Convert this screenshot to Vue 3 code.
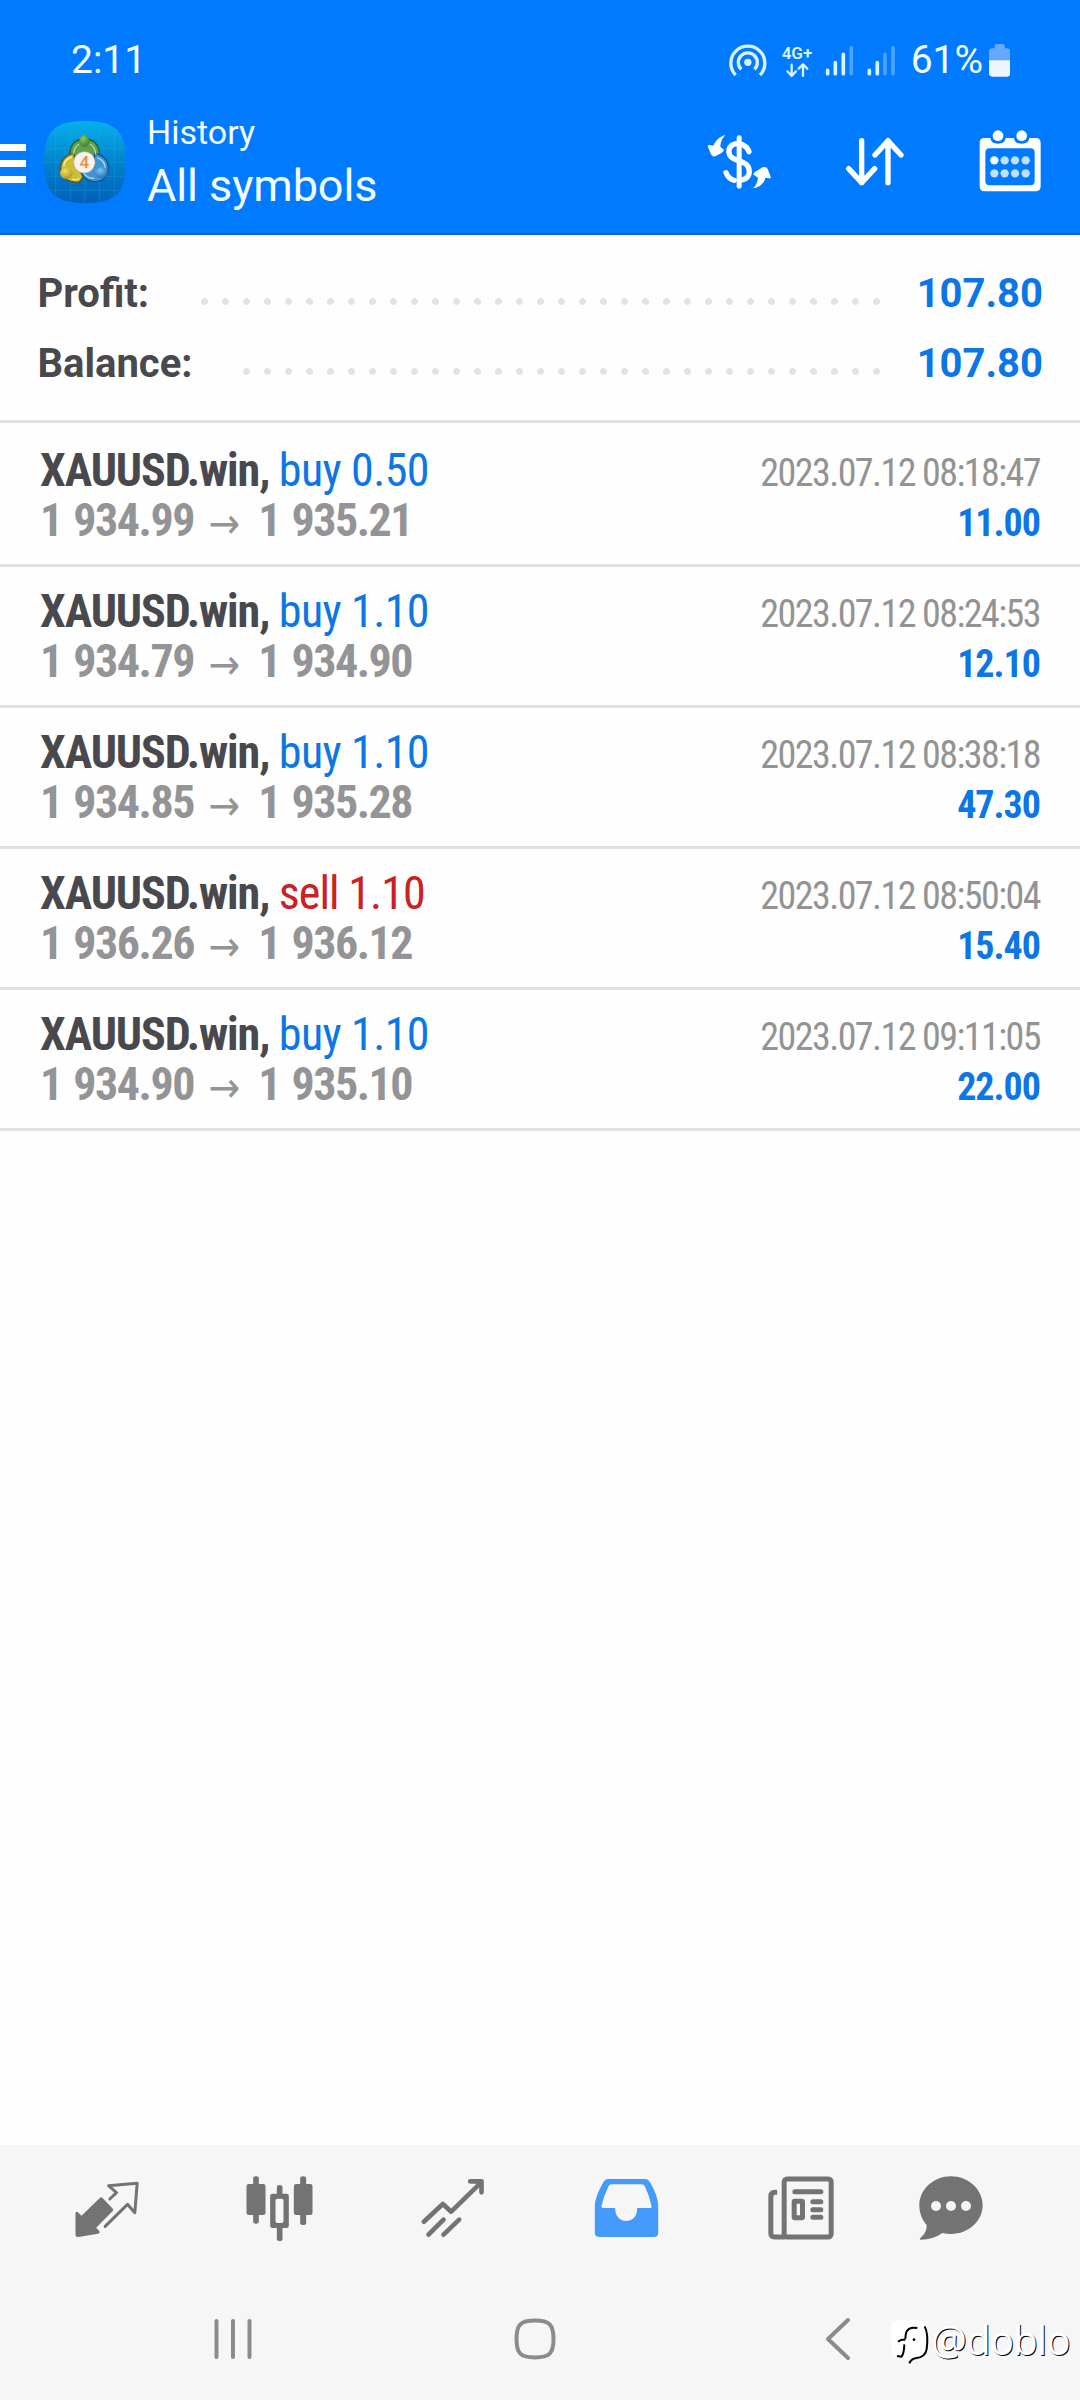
<template>
  <div class="screen">
    <header class="header">
      <div class="status">
        <span class="clock">2:11</span>
        <div class="status-right">
          <svg class="radio" viewBox="140 120 520 120">
            <g fill="none" stroke="#d9f3ff" stroke-width="10">
              <path d="M166 225A51 51 0 1 1 239 225" />
              <path d="M183 208A28.500 28.500 0 1 1 222 208" />
            </g>
            <circle cx="202.500" cy="187" r="11" fill="#d9f3ff" />
            <text x="304" y="178" class="net">4G+</text>
            <g fill="none" stroke="#d9f3ff" stroke-width="7" stroke-linecap="round" stroke-linejoin="round">
              <path d="M334 194V227M321 214L334 228L347 214" />
              <path d="M368 227V194M355 206L368 193L381 206" />
            </g>
            <g stroke="#d9f3ff" stroke-width="11" stroke-linecap="round">
              <path d="M442 211V221M465 188V221M489 163V221M567 211V221M591 188V221" />
              <path opacity=".35" d="M513 143V221M614 163V221M638 143V221" />
            </g>
          </svg>
          <span class="percent">61%</span>
          <svg class="battery" viewBox="924 133 64 98">
            <path fill="#66a8fb" d="M941 138Q941 133 946 133H966Q971 133 971 138V146H979Q988 147 988 157V185H924V157Q924 147 933 146H941Z" />
            <path fill="#edf5ff" d="M924 182H988V221Q988 231 978 231H934Q924 231 924 221Z" />
          </svg>
        </div>
      </div>

      <div class="toolbar">
        <div class="burger"><i></i><i></i><i></i></div>
        <svg class="logo" viewBox="0 0 246 246">
          <defs>
            <linearGradient id="tile" x1="0" y1="0" x2="0" y2="1">
              <stop offset="0" stop-color="#06b0ee" />
              <stop offset=".5" stop-color="#0283cd" />
              <stop offset="1" stop-color="#0160b8" />
            </linearGradient>
            <radialGradient id="green" cx=".4" cy=".3" r=".8">
              <stop offset="0" stop-color="#8fc65a" />
              <stop offset="1" stop-color="#2c7a2c" />
            </radialGradient>
            <radialGradient id="gold" cx=".4" cy=".3" r=".8">
              <stop offset="0" stop-color="#efe26a" />
              <stop offset="1" stop-color="#a48e14" />
            </radialGradient>
            <radialGradient id="blue" cx=".4" cy=".3" r=".8">
              <stop offset="0" stop-color="#7cc6f4" />
              <stop offset="1" stop-color="#1c69b4" />
            </radialGradient>
          </defs>
          <path fill="url(#tile)" d="M123 0C215 0 246 31 246 123S215 246 123 246S0 215 0 123S31 0 123 0Z" />
          <path stroke="#35b4e6" stroke-width="1.500" opacity=".5" d="M35 20V226M79 3V243M123 0V246M167 3V243M211 20V226M20 40H226M4 82H242M0 124H246M4 166H242M20 208H226" />
          <g stroke-width="4">
            <path fill="#5f9f52" stroke="#255f2e" d="M78 98C78 70 96 54 122 54S166 70 166 100Q164 122 150 136L96 136Q78 120 78 98Z" />
            <path fill="#cdbc35" stroke="#5d5517" d="M90 97C62 102 46 124 51 150C58 176 80 188 108 182L128 150L92 116Z" />
            <path fill="#3f94d4" stroke="#174f86" d="M152 97C184 102 197 126 192 152C184 178 162 187 138 180Q116 170 110 152L150 138Z" />
          </g>
          <path fill="none" stroke="#b5d897" stroke-width="4" d="M89 100C90 84 98 73 106 69M138 69C148 74 154 86 155 100" />
          <path fill="none" stroke="#f4ec9c" stroke-width="4" d="M84 108C66 114 58 124 60 138M84 174Q96 180 106 172" />
          <path fill="none" stroke="#a8dbf8" stroke-width="4" d="M160 110C178 118 184 126 183 140M120 158Q134 174 152 172" />
          <ellipse cx="121" cy="60" rx="15" ry="18" fill="url(#green)" />
          <ellipse cx="67" cy="157" rx="19" ry="17" fill="url(#gold)" />
          <ellipse cx="172" cy="155" rx="18" ry="16" fill="url(#blue)" />
          <circle cx="121" cy="124" r="32" fill="#f7f3ee" stroke="#b9ae9b" stroke-width="2" />
          <text x="121" y="142" class="logo-num">4</text>
        </svg>
        <div class="titles">
          <div class="subtitle">History</div>
          <div class="title">All symbols</div>
        </div>
        <div class="actions">
          <svg viewBox="70 377 216 216" fill="#fff">
            <path d="M171 412Q171 405 178.500 405T186 412V558Q186 565 178.500 565T171 558Z" />
            <g fill="none" stroke="#fff" stroke-width="16" stroke-linecap="round">
              <path d="M208 454C200 432 176 426 160 433C144 441 144 462 157 472C171 483 197 482 206 500C214 522 204 537 184 539" />
              <path d="M139 517C144 530 153 538 164 540" />
            </g>
            <path d="M138 404C127 413 123 427 122 439L133 448Q132 453 124 459L107 468Q98 471 94 462L84 438Q85 433 90 434L101 436C107 421 122 407 138 404Z" />
            <path d="M219 564C231 554 233 544 235 532L223 524Q219 520 226 515L249 501Q260 498 264 506L273 529Q274 535 268 534L257 532C254 549 237 564 219 564Z" />
          </svg>
          <svg viewBox="479 377 216 216" fill="none" stroke="#fff" stroke-width="16" stroke-linecap="round" stroke-linejoin="round">
            <path d="M547 421V547M508 505L547 547L586 505" />
            <path d="M626 547V421M587 464L626 421L665 464" />
          </svg>
          <svg viewBox="883 377 216 216">
            <path fill="#fff" fill-rule="evenodd" d="M914 413H932Q933 430 955 430T978 413H1003Q1004 430 1026 430T1049 413H1068Q1083 413 1083 428V558Q1083 573 1068 573H914Q900 573 900 558V428Q900 413 914 413ZM930 444Q917 444 917 457V542Q917 555 930 555H1052Q1065 555 1065 542V457Q1065 444 1052 444Z" />
            <g fill="#fff">
              <circle cx="955" cy="406" r="16" /><circle cx="1026" cy="406" r="16" /><circle cx="944" cy="480" r="12.500" />
            </g>
            <g fill="#bfe0ff">
              <circle cx="975" cy="480" r="12.500" /><circle cx="1006" cy="480" r="12.500" /><circle cx="1038" cy="480" r="12.500" />
              <circle cx="944" cy="519" r="12.500" /><circle cx="975" cy="519" r="12.500" /><circle cx="1006" cy="519" r="12.500" /><circle cx="1038" cy="519" r="12.500" />
            </g>
          </svg>
        </div>
      </div>
    </header>

    <section class="summary">
      <div v-for="item in summary" :key="item.label" class="summary-row">
        <span class="label">{{ item.label }}</span>
        <span class="dots" :style="{ width: item.dots * 21 + 'px' }"></span>
        <span class="amount">{{ item.value }}</span>
      </div>
    </section>

    <ul class="deals">
      <li v-for="deal in deals" :key="deal.time" class="deal">
        <div class="line">
          <div>
            <b class="name">XAUUSD.win,</b>
            <span :class="['side', deal.side]">{{ deal.side }} {{ deal.volume }}</span>
          </div>
          <span class="time">{{ deal.time }}</span>
        </div>
        <div class="line">
          <div class="prices">
            <span>{{ deal.open }}</span>
            <span class="arrow">→</span>
            <span>{{ deal.close }}</span>
          </div>
          <span class="profit">{{ deal.profit }}</span>
        </div>
      </li>
    </ul>

    <nav class="tabs">
      <!-- quotes -->
      <svg viewBox="214.500 126 216 216" fill="#737373">
        <path d="M301 204Q305 200 309 204L340 236Q343 240 339 244L290 293L300 304Q302 309 296 311L237 321Q228 322 228 314V249Q230 242 237 248L246 257Z" />
        <path fill="none" stroke="#737373" stroke-width="9" stroke-linecap="round" stroke-linejoin="round" d="M331 207L351 188L327 167L413 160L406 248L384 223L317 289" />
      </svg>
      <!-- charts -->
      <svg viewBox="733.500 126 216 216" fill="#737373">
        <path d="M761 146Q761 139 769.500 139T778 146V162H791Q798 162 798 169V248Q798 255 791 255H778V274Q778 281 769.500 281T761 274V255H748Q741 255 741 248V169Q741 162 748 162H761Z" />
        <path d="M902 146Q902 139 911 139T920 146V162H932Q939 162 939 169V248Q939 255 932 255H920V278Q920 285 911 285T902 278V255H890Q883 255 883 248V169Q883 162 890 162H902Z" />
        <path fill-rule="evenodd" d="M832 172Q832 165 840.500 165T849 172V191H861Q868 191 868 198V287Q868 294 861 294H849V326Q849 333 840.500 333T832 326V294H819Q812 294 812 287V198Q812 191 819 191H832ZM834 206Q828 206 828 212V273Q828 279 834 279H846Q852 279 852 273V212Q852 206 846 206Z" />
      </svg>
      <!-- trade -->
      <svg viewBox="172.500 126 216 216" fill="none" stroke="#737373" stroke-width="14" stroke-linecap="round" stroke-linejoin="round">
        <path d="M193 275L250 222L275 245L365 157M332 154H366V187M207 314L252 269M252 314L299 269" />
      </svg>
      <!-- history -->
      <svg viewBox="691.500 126 216 216">
        <path fill="#449bfb" fill-rule="evenodd" d="M747 147H857Q866 147 871 156C885 180 896 205 896 228V308Q896 321 883 321H720Q706 321 706 308V228C706 205 719 180 732 156Q737 147 747 147ZM757 163Q750 163 747 169Q733 198 726 227Q725 234 732 234H767C767 258 780 273 800 273S833 258 833 234H870Q878 234 876 227Q869 196 856 169Q853 163 846 163Z" />
      </svg>
      <!-- news -->
      <svg viewBox="130.500 126 216 216" fill="none" stroke="#737373" stroke-width="15" stroke-linejoin="round">
        <rect x="194" y="147" width="141" height="174" rx="9" />
        <path d="M173 187H167Q154 187 154 200V309Q154 321 166 321H196" />
        <path stroke-linecap="round" d="M226 185H304M280 215H304M280 239H304M280 262H304" />
        <rect x="224" y="214" width="25" height="49" rx="2" />
      </svg>
      <!-- messages -->
      <svg viewBox="585 126 216 216">
        <path fill="#737373" d="M693 139C745 139 788 178 788 226S745 312 693 312Q680 312 667 309Q640 329 602 329Q597 328 602 323Q621 308 620 285C606 270 598 249 598 226C598 178 641 139 693 139Z" />
        <g fill="#f6f6f6"><circle cx="648" cy="228" r="15" /><circle cx="693" cy="228" r="15" /><circle cx="738" cy="228" r="15" /></g>
      </svg>
    </nav>

    <div class="system">
      <svg viewBox="0 0 50 50"><path d="M8.500 7V43M25 7V43M41.500 7V43" /></svg>
      <svg viewBox="0 0 50 50"><path d="M25 6.500C39.500 6.500 43.500 10.500 43.500 25S39.500 43.500 25 43.500S6.500 39.500 6.500 25S10.500 6.500 25 6.500Z" /></svg>
      <svg viewBox="0 0 50 50"><path d="M35 6L15 25L35 44" /></svg>
      <div class="watermark">
        <svg viewBox="510 570 120 140">
          <path fill="#fff" d="M538 574H594Q618 574 618 598V664Q616 686 586 688Q573 691 566 700Q562 688 538 686Q514 684 514 662V598Q514 574 538 574Z" />
          <path fill="none" stroke="#000" stroke-width="6" d="M592 597Q560 592 557 618L556 630M534 638L545 632H556M553 646Q552 676 544 683L531 681" />
          <path fill="none" stroke="#000" stroke-width="6" d="M614 592Q626 615 620 660Q617 684 586 688Q573 691 568 703" />
          <circle cx="582" cy="632" r="4" />
        </svg>
        <span>@doblo</span>
      </div>
    </div>
  </div>
</template>

<script setup>
import { ref } from "vue";

const summary = ref([
  { label: "Profit:", value: "107.80", dots: 33 },
  { label: "Balance:", value: "107.80", dots: 31 },
]);

const deals = ref([
  { side: "buy", volume: "0.50", open: "1 934.99", close: "1 935.21", time: "2023.07.12 08:18:47", profit: "11.00" },
  { side: "buy", volume: "1.10", open: "1 934.79", close: "1 934.90", time: "2023.07.12 08:24:53", profit: "12.10" },
  { side: "buy", volume: "1.10", open: "1 934.85", close: "1 935.28", time: "2023.07.12 08:38:18", profit: "47.30" },
  { side: "sell", volume: "1.10", open: "1 936.26", close: "1 936.12", time: "2023.07.12 08:50:04", profit: "15.40" },
  { side: "buy", volume: "1.10", open: "1 934.90", close: "1 935.10", time: "2023.07.12 09:11:05", profit: "22.00" },
]);
</script>

<style>
body {
  background: #fff;
}
</style>

<style scoped>
.screen {
  display: flex;
  flex-direction: column;
  width: 1080px;
  height: 2400px;
  overflow: hidden;
  background: #fefefe;
  font-family: Roboto, "Liberation Sans", sans-serif;
}

svg {
  display: block;
  flex: none;
}

/* ---- header ---- */
.header {
  box-sizing: border-box;
  height: 235px;
  background: #007aff;
  border-bottom: 2px solid #1467bd;
  color: #f2fcff;
}

.status {
  box-sizing: border-box;
  display: flex;
  justify-content: space-between;
  height: 90px;
  padding: 40px 70px 0 71px;
  font-size: 39px;
  line-height: 41px;
}

.status-right {
  display: flex;
}

.radio {
  width: 173.300px;
  height: 40px;
}

.net {
  font-size: 51px;
  font-weight: 600;
  fill: #d9f3ff;
}

.percent {
  width: 78px;
  margin-left: 10px;
}

.battery {
  width: 21.300px;
  height: 32.700px;
  margin-top: 4px;
}

.toolbar {
  display: flex;
  align-items: center;
  height: 143px;
}

.burger {
  display: flex;
  flex-direction: column;
  gap: 9px;
  width: 26px;
  margin: 3px 17.500px 0 0;
}

.burger i {
  height: 7px;
  background: #fff;
}

.logo {
  width: 82px;
  height: 82px;
}

.logo-num {
  font-size: 52px;
  font-weight: 500;
  text-anchor: middle;
  fill: #ee8a44;
}

.titles {
  flex: 1;
  padding: 9px 0 0 21.500px;
}

.subtitle {
  font-size: 34px;
  line-height: 40px;
}

.title {
  font-size: 45px;
  letter-spacing: -0.1px;
  line-height: 68px;
}

.actions {
  display: flex;
  gap: 63.500px;
  padding-right: 34px;
}

.actions svg {
  width: 72px;
  height: 72px;
}

/* ---- totals ---- */
.summary {
  box-sizing: border-box;
  height: 188px;
  padding: 24px 37px 0 37.500px;
  border-bottom: 3px solid #e0e0e0;
}

.summary-row {
  display: flex;
  height: 70px;
  font-size: 40px;
  font-weight: 700;
  line-height: 70px;
}

.label {
  color: #49494d;
}

.dots {
  height: 7px;
  margin: 39px 30px 0 auto;
  background: radial-gradient(circle, #e2e2e2 3px, transparent 3.800px) 0 0 / 21px 7px;
}

.amount {
  color: #0d76e6;
}

/* ---- deals ---- */
.deals {
  flex: 1;
  margin: 0;
  padding: 3px 0 0;
  list-style: none;
}

.deal {
  box-sizing: border-box;
  height: 141px;
  padding: 19px 40px 0;
  border-bottom: 3px solid #e0e0e0;
  font-stretch: 75%;
}

.line {
  display: flex;
  align-items: baseline;
  justify-content: space-between;
  height: 50px;
  font-size: 46px;
  line-height: 50px;
  white-space: nowrap;
}

.name {
  color: #49494d;
  letter-spacing: -1.100px;
}

.side {
  margin-left: 9.500px;
}

.buy {
  color: #0d76e6;
  letter-spacing: -0.600px;
}

.sell {
  color: #cb2024;
  letter-spacing: -0.950px;
}

.time {
  color: #939393;
  font-size: 38px;
  letter-spacing: -1.550px;
}

.prices {
  color: #949496;
  font-weight: 700;
  letter-spacing: -1.500px;
  word-spacing: 2.500px;
}

.arrow {
  margin: 0 18px 0 14.500px;
  font-family: "DejaVu Sans", sans-serif;
  font-size: 42px;
  font-weight: 400;
  letter-spacing: 0;
  line-height: 1;
  vertical-align: -2px;
}

.profit {
  color: #0d76e6;
  font-size: 38px;
  font-weight: 700;
  letter-spacing: -1px;
}

/* ---- bottom bars ---- */
.tabs {
  box-sizing: border-box;
  display: grid;
  grid-template-columns: repeat(5, 173px) 131px;
  justify-items: center;
  height: 125px;
  padding: 27px 0 0 20.500px;
  background: #f6f6f6;
}

.tabs svg {
  width: 72px;
  height: 72px;
}

.system {
  position: relative;
  box-sizing: border-box;
  display: flex;
  gap: 252.500px;
  height: 130px;
  padding: 44px 0 0 207.500px;
  background: #f6f6f6;
}

.system > svg {
  width: 50px;
  height: 50px;
  fill: none;
  stroke: #8b8b8b;
  stroke-width: 4;
  stroke-linecap: round;
  stroke-linejoin: round;
}

.watermark {
  position: absolute;
  top: 49px;
  left: 890px;
  display: flex;
  color: #fff;
  font-family: "Open Sans", sans-serif;
  font-size: 40px;
  font-weight: 400;
  line-height: 42px;
  text-shadow: 1px 1px 0 #000;
}

.watermark svg {
  width: 40px;
  height: 46.700px;
}

.watermark span {
  margin-left: 1px;
  letter-spacing: -0.700px;
}
</style>
